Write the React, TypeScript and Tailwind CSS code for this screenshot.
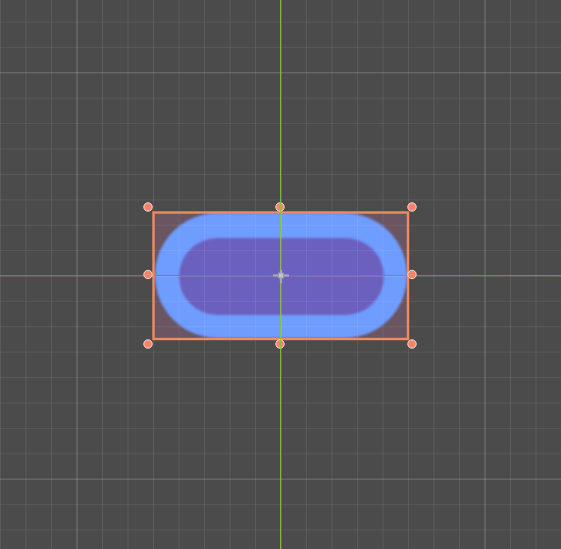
import React from "react";

const W = 561;
const H = 549;

export default function App() {
  const vLines: { x: number; major: boolean }[] = [];
  for (let k = -11; k <= 11; k++) {
    vLines.push({ x: 281 + 25.5 * k, major: k % 8 === 0 });
  }
  const hLines: { y: number; major: boolean }[] = [];
  for (let k = -10; k <= 10; k++) {
    hLines.push({ y: 276 + 25.4 * k, major: k % 8 === 0 });
  }
  const handles = [
    [148, 207],
    [280, 207],
    [412, 207],
    [148, 274.5],
    [412, 274.5],
    [148, 344],
    [280, 344],
    [412, 344],
  ];

  return (
    <div className="relative w-[561px] h-[549px] overflow-hidden bg-[#4b4b4b]">
      {/* collision rect fill */}
      <div className="absolute left-[153px] top-[212px] w-[256px] h-[128px] bg-[#6a5561]" />
      {/* capsule sprite */}
      <div className="absolute left-[155px] top-[213px] w-[252px] h-[125px] rounded-full bg-[#6f9cff] blur-[1.3px]" />
      <div className="absolute left-[179px] top-[238px] w-[205px] h-[77px] rounded-full bg-[#6c60be] blur-[1.3px]" />

      <svg
        className="absolute left-0 top-0"
        width={W}
        height={H}
        viewBox={`0 0 ${W} ${H}`}
      >
        <defs>
          <linearGradient id="xaxis" x1="0" y1="0" x2={W} y2="0" gradientUnits="userSpaceOnUse">
            <stop offset="0" stopColor="#b45c70" />
            <stop offset="0.5" stopColor="#c0506e" />
            <stop offset="1" stopColor="#8e7cb4" />
          </linearGradient>
        </defs>
        {vLines.map((l, i) => (
          <line
            key={`v${i}`}
            x1={l.x}
            y1={0}
            x2={l.x}
            y2={H}
            stroke="#ffffff"
            strokeOpacity={l.major ? 0.24 : 0.08}
            strokeWidth={1}
          />
        ))}
        {hLines.map((l, i) => (
          <line
            key={`h${i}`}
            x1={0}
            y1={l.y}
            x2={W}
            y2={l.y}
            stroke="#ffffff"
            strokeOpacity={l.major ? 0.22 : 0.08}
            strokeWidth={1}
          />
        ))}
        {/* x axis */}
        <line x1={0} y1={275.5} x2={W} y2={275.5} stroke="url(#xaxis)" strokeOpacity={0.8} strokeWidth={1} />

        {/* orange rect border */}
        <rect x={153.5} y={212.5} width={254.5} height={126.5} fill="none" stroke="#f08a60" strokeWidth={2.4} />

        {/* handles */}
        {handles.map(([x, y], i) => (
          <circle key={i} cx={x} cy={y} r={4.2} fill="#f3836a" stroke="#ffd9cc" strokeWidth={1} />
        ))}

        {/* y axis */}
        <line x1={280.5} y1={0} x2={280.5} y2={H} stroke="#84c23e" strokeOpacity={0.9} strokeWidth={1} />

        {/* pivot crosshair */}
        <g stroke="#a9a9ad" strokeWidth={2.2}>
          <line x1={273} y1={275.5} x2={278} y2={275.5} />
          <line x1={284} y1={275.5} x2={289} y2={275.5} />
          <line x1={281} y1={270} x2={281} y2={273.5} />
          <line x1={281} y1={277.5} x2={281} y2={283} />
        </g>
        <rect x={278.5} y={273} width={5} height={5} fill="#c2c2c6" stroke="#9a9aa0" strokeWidth={0.8} />
      </svg>
    </div>
  );
}
